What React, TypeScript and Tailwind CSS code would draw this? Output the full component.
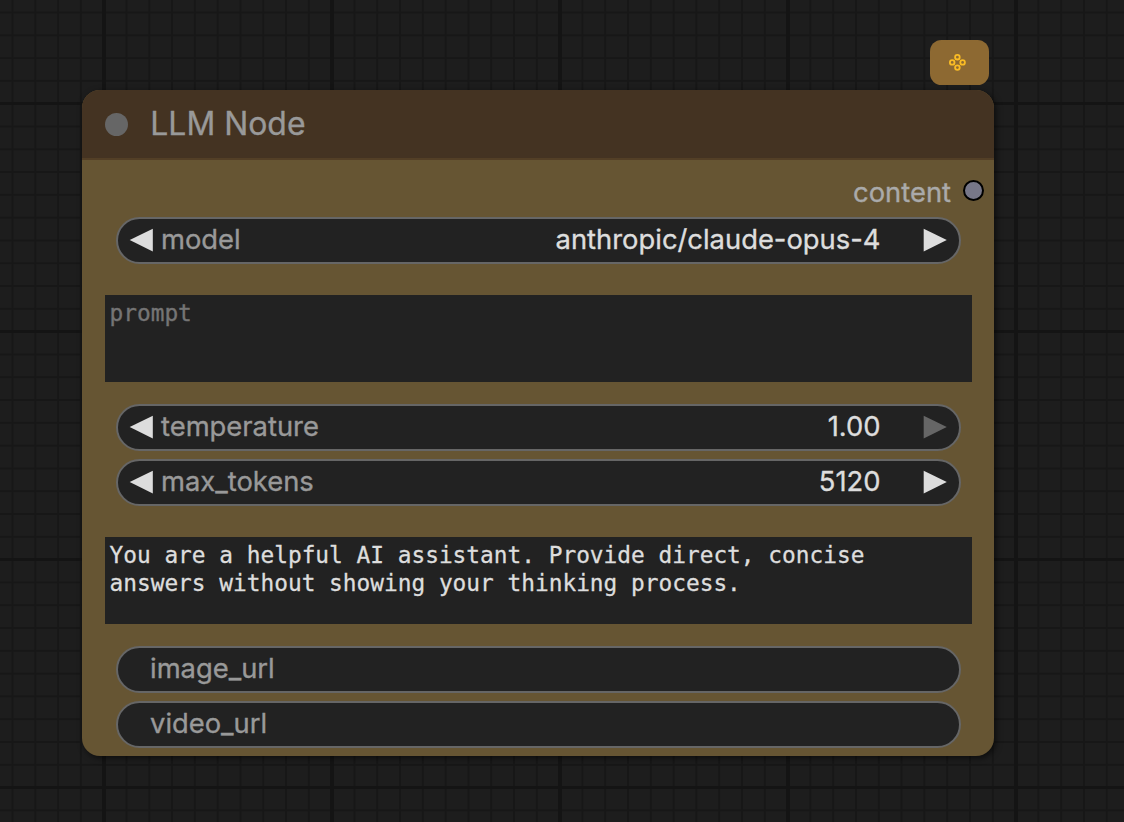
import React from "react";

interface WidgetProps {
  label: string;
  value?: string;
  arrows?: boolean;
  atMax?: boolean;
}

function Arrow({ left, dim }: { left?: boolean; dim?: boolean }) {
  return (
    <svg width="24" height="24" viewBox="0 0 24 24" className={dim ? "text-[#666]" : "text-[#ddd]"}>
      <path d={left ? "M23.8 0.7v22.8L0.7 12.1z" : "M0.7 0.7v22.8l23.1-11.4z"} fill="currentColor" />
    </svg>
  );
}

function Widget({ label, value, arrows, atMax }: WidgetProps) {
  return (
    <div className="ml-[33.5px] flex h-[47px] w-[845px] shrink-0 items-center rounded-full border-2 border-[#666] bg-[#222] pb-0.5 text-[27.36px] leading-[34px]">
      {arrows && (
        <div className="mt-px ml-[11.5px] w-8">
          <Arrow left />
        </div>
      )}
      <span className={arrows ? "mb-0.5 text-[#999]" : "ml-[32.5px] text-[#999]"}>{label}</span>
      {value && <span className="mr-[42px] mb-0.5 ml-auto text-[#ddd]">{value}</span>}
      {arrows && (
        <div className="mt-px mr-[12px] w-6">
          <Arrow dim={atMax} />
        </div>
      )}
    </div>
  );
}

function TextBox({ children, placeholder }: { children: React.ReactNode; placeholder?: boolean }) {
  return (
    <div
      className={
        "ml-[23px] h-[86.5px] w-[866.5px] shrink-0 bg-[#222] px-[4.5px] pt-1 font-['DejaVu_Sans_Mono',monospace] text-[22.8px] leading-[28px] " +
        (placeholder ? "text-[#757575]" : "text-[#ddd] [-webkit-text-stroke:0.3px]")
      }
    >
      {children}
    </div>
  );
}

export default function App() {
  return (
    <div className="relative h-[822px] w-[1124px] overflow-hidden bg-[#1d1d1d] bg-[linear-gradient(90deg,#141414_4.5px,transparent_4.5px),linear-gradient(#141414_3.5px,transparent_3.5px),linear-gradient(90deg,#171717_2px,transparent_2px),linear-gradient(#171717_2px,transparent_2px)] bg-[length:228px_228px,228px_228px,22.8px_22.8px,22.8px_22.8px] bg-[position:102px_0,0_102px,11.5px_0,0_11.5px] font-['Inter',sans-serif] [-webkit-text-stroke:0.35px]">
      {/* badge floating above the node */}
      <div className="absolute top-[39.5px] left-[930px] flex h-[45.5px] w-[59.3px] rounded-[11.4px] bg-[#8d6932] pt-[13.5px] pl-[18px]">
        <svg width="19" height="19" viewBox="0 0 19 19" fill="none" stroke="#fabc25" strokeWidth="1.8">
          <circle cx="9.4" cy="4.2" r="2.3" />
          <circle cx="4.2" cy="9.4" r="2.3" />
          <circle cx="14.6" cy="9.4" r="2.3" />
          <circle cx="9.4" cy="14.6" r="2.3" />
        </svg>
      </div>

      <div className="absolute top-[90px] left-[82px] flex h-[665.7px] w-[912px] flex-col overflow-hidden rounded-[18px] bg-[#653] shadow-[2px_2px_6px_rgba(0,0,0,0.6)]">
        <div className="flex h-[70px] shrink-0 items-center border-b-2 border-[#533f26] bg-[#432] pl-[22.5px]">
          <div className="h-[23px] w-[23px] rounded-full bg-[#666]" />
          <span className="ml-[22.8px] text-[31.92px] leading-[40px] text-[#999]">LLM Node</span>
        </div>

        <div className="flex h-[57px] shrink-0 items-center justify-end pr-[10px]">
          <span className="mt-[7px] text-[27.36px] leading-[34px] text-[#aaa]">content</span>
          <div className="mt-[3px] ml-3 h-[21px] w-[21px] rounded-full border-[2.3px] border-black bg-[#778]" />
        </div>

        <Widget label="model" value="anthropic/claude-opus-4" arrows />
        <div className="h-[31px] shrink-0" />
        <TextBox placeholder>prompt</TextBox>
        <div className="h-[22.5px] shrink-0" />
        <div className="flex flex-col gap-2">
          <Widget label="temperature" value="1.00" arrows atMax />
          <Widget label="max_tokens" value="5120" arrows />
        </div>
        <div className="h-[31px] shrink-0" />
        <TextBox>You are a helpful AI assistant. Provide direct, concise answers without showing your thinking process.</TextBox>
        <div className="h-[22px] shrink-0" />
        <div className="flex flex-col gap-2">
          <Widget label="image_url" />
          <Widget label="video_url" />
        </div>
      </div>
    </div>
  );
}
